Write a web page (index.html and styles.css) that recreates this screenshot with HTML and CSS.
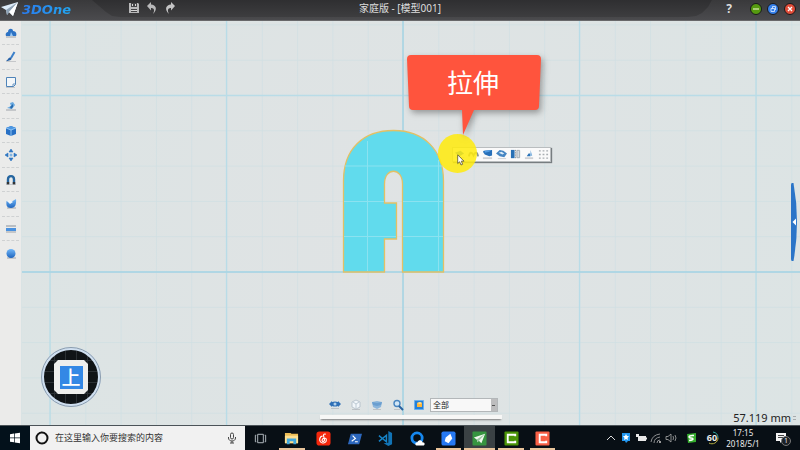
FILE: index.html
```html
<!DOCTYPE html>
<html lang="zh-CN">
<head>
<meta charset="utf-8">
<title>3DOne 家庭版</title>
<link rel="stylesheet" href="styles.css">
</head>
<body>
<svg class="defs" aria-hidden="true">
  <defs>
    <linearGradient id="ball" x1="0" y1="0" x2="0" y2="1"><stop offset="0" stop-color="#72b8fa"/><stop offset="1" stop-color="#1e64bd"/></linearGradient>
    <pattern id="minor" x="50" y="95" width="35.3" height="35.3" patternUnits="userSpaceOnUse"><path d="M0 0H35.3M0 0V35.3" stroke="#c3dbe2" stroke-width="1.3" fill="none"/></pattern>
  </defs>
</svg>

<header class="titlebar">
  <div class="brand">
    <svg class="brand-mark" viewBox="0 0 18 16"><path d="M0 5 17 0 12 14 8 10 6 13 5 8Z" fill="#dcebf8"/><path d="M5 8 17 0 6 13Z" fill="#8ea2b5"/><path d="M8 10 17 0 12 14Z" fill="#fff"/></svg>
    <span class="brand-name">3DOne</span>
  </div>
  <div class="quick">
    <button aria-label="保存"><svg viewBox="0 0 12 12"><path d="M1 1h9l1 1v9H1Z" fill="#b9b9ba"/><path d="M3 1h6v4H3ZM3 7h6v3H3Z" fill="#444446"/><path d="M4 2h1v2H4ZM7 2h1v2H7ZM3 8h6v1H3Z" fill="#d5d5d5"/></svg></button>
    <button aria-label="撤销"><svg viewBox="0 0 12 12"><path d="M1 4 5 0v2.500C10 3 12 7 7 12 9 8 8 6 5 6v2.500Z" fill="#b9b9ba"/></svg></button>
    <button aria-label="重做"><svg viewBox="0 0 12 12"><path d="M11 4 7 0v2.500C2 3 0 7 5 12 3 8 4 6 7 6v2.500Z" fill="#c4c4c5"/></svg></button>
  </div>
  <h1 class="doc">家庭版 - [模型001]</h1>
  <div class="window-controls">
    <button class="help">?</button>
    <button class="dot green" aria-label="最小化"><svg viewBox="0 0 10 10"><path d="M2 5h6" stroke="#dff0b8" stroke-width="1.200"/></svg></button>
    <button class="dot blue" aria-label="还原"><svg viewBox="0 0 10 10"><path d="M3 4.500h3.500v3H3ZM4.500 4.500v-2H7.500v3.500" fill="none" stroke="#e0eeff" stroke-width=".8"/></svg></button>
    <button class="dot red" aria-label="关闭"><svg viewBox="0 0 10 10"><path d="m3 3 4 4M7 3 3 7" stroke="#fff" stroke-width="1.300"/></svg></button>
  </div>
</header>

<main class="workspace">
  <nav class="tools" aria-label="工具">
    <button aria-label="基本实体"><svg viewBox="0 0 12 12"><path class="shade" d="M1 9h10v2H1Z"/><path d="M1 9C0 6 2 5 3 5 3 1 8 1 8 4c3 0 4 3 3 5Z" fill="#2d72c4"/><path d="m6 5 2 4H5Z" fill="#9ccaf5"/></svg></button>
    <button aria-label="草图绘制"><svg viewBox="0 0 12 12"><path class="shade" d="M1 10h10v1H1Z"/><path d="M6 7 9.500 1" stroke="#3c80ca" stroke-width="2"/><path d="M1 10C3 9 3 6.500 5.500 6.500 8 7.500 6 10 1 10Z" fill="#2862a8"/></svg></button>
    <button aria-label="草图编辑"><svg viewBox="0 0 12 12"><path d="M1.500 1.500h9v7l-2 2h-7Z" fill="#f3f6f9" stroke="#4f83b8"/><path d="M8 10.500V8h2.500" fill="none" stroke="#4f83b8" stroke-width=".8"/><path class="shade" d="M1 11h9v1H1Z"/></svg></button>
    <button aria-label="特征造型"><svg viewBox="0 0 12 12"><path class="shade" d="M1 9h10v2H1Z"/><path d="m2 8 4-2-1-3 3-1 2 3-3 4Z" fill="#69a8df"/><path d="m5 7 3-3v3L6 9Z" fill="#296bae"/></svg></button>
    <button aria-label="特殊功能"><svg viewBox="0 0 12 12"><path d="m6 1 5 2v6l-5 2-5-2V3Z" fill="#2870c5"/><path d="m6 1 5 2-5 2-5-2Z" fill="#4e98e3"/><path d="m1 3 5 2 5-2M6 5v6" fill="none" stroke="#a5d4fb" stroke-width=".8"/></svg></button>
    <button aria-label="基本编辑"><svg viewBox="0 0 12 12"><path d="m6 0 2 3H4ZM6 12l2-3H4ZM0 6l3-2v4ZM12 6 9 4v4Z" fill="#2e75c2" stroke="#2e75c2" stroke-width=".6"/><circle cx="6" cy="6" r="1.500" fill="#82b4e2"/></svg></button>
    <button aria-label="自动吸附"><svg viewBox="0 0 12 12"><path d="M3 10V5.500c0-4.500 6-4.500 6 0V10" fill="none" stroke="#26659f" stroke-width="2.400"/><path d="M1.800 8h2.400v2.500H1.800ZM7.800 8h2.400v2.500H7.800Z" fill="#333"/><path class="shade" d="M1 10h10v1H1Z"/></svg></button>
    <button aria-label="组合编辑"><svg viewBox="0 0 12 12"><path class="shade" d="M2 9h9v2H2Z"/><path d="M1.500 3 6 4l5-3c.5 5-.5 9-5 9S1 7 1.500 3Z" fill="url(#ball)"/><path d="m2 3 3-1 3 2-3 2Z" fill="#edf5fb"/></svg></button>
    <button aria-label="距离测量"><svg viewBox="0 0 12 12"><path d="M1 2h10v2H1Z" fill="#b9bec3"/><path d="M1 5h10v3H1Z" fill="#4a91df"/><path class="shade" d="M1 8h10v2H1Z"/></svg></button>
    <button aria-label="材质渲染"><svg viewBox="0 0 12 12"><path class="shade" d="M2 9h9v2H2Z"/><circle cx="6" cy="5.500" r="4.500" fill="url(#ball)"/></svg></button>
  </nav>

  <section class="canvas" aria-label="模型">
    <svg class="scene" viewBox="22 21 778 404" preserveAspectRatio="xMidYMid slice">
      <rect x="22" y="21" width="778" height="404" fill="url(#minor)" opacity=".55"/>
      <path d="M50 21V425M226.500 21V425M403 21V425M579.500 21V425M756 21V425M22 95.500H800M22 272H800" fill="none" stroke="#b9dce7" stroke-width="1.300"/>
      <path d="M403 21V425M22 272H800" stroke="#9fd0e1" stroke-width="1"/>
      <path d="M343.500 272V181C343.500 149 363 130.500 393.500 130.500S443.500 150 443.500 181V272H402.500V184C402.500 167 384.500 167 384.500 184V203H396.500V239H384.500V272Z" fill="#61dbed" stroke="#e2c066" stroke-width="1.300"/>
      <path d="M367.500 141V271M438.500 160V271M345 166H442M344 201.500H384M403 201.500H443M344 236.500H396M403 236.500H443" fill="none" stroke="#8be2f0" stroke-width="1"/>
    </svg>

    <div class="float-tools">
      <button aria-label="拉伸"><svg viewBox="0 0 12 12"><path d="m1 4 6-2 4 3-5 3Z" fill="#3b82c8"/><path class="shade" d="M2 9h9v1H2Z"/></svg></button>
      <button aria-label="旋转"><svg viewBox="0 0 12 12"><path d="M1 8c1-5 3-5 5-1 2-4 4-4 5 1" fill="none" stroke="#8c9690" stroke-width="2"/></svg></button>
      <button aria-label="扫掠"><svg viewBox="0 0 12 12"><path d="m2 2 9-1v6l-3 1-5-2-2-3Z" fill="#276fb9"/><path d="m3 2 7-1-2 2-5 1Z" fill="#4f9ae2"/><path class="shade" d="M1 9h10v2H1Z"/></svg></button>
      <button aria-label="放样"><svg viewBox="0 0 12 12"><path d="m0 5 4-4 4 1 4 3-3 4-5-1Z" fill="#4686c3"/><path d="m3 4 3-1 3 2-2 1Z" fill="#dcecf8"/><path class="shade" d="M2 10h9v1H2Z"/></svg></button>
      <button aria-label="镜像"><svg viewBox="0 0 12 12"><path d="M1 1h4v9H1Z" fill="#2870b5"/><path d="M7.500 1.500h3v8h-3Z" fill="#d5dbe0" stroke="#9da7af"/><path d="M6 1v10" stroke="#555" stroke-width=".8" stroke-dasharray="1"/></svg></button>
      <button aria-label="移动"><svg viewBox="0 0 12 12"><path d="M7 1v7H3l2-3h2" fill="#2d74b8"/><path d="m7 1 2 6-2 1Z" fill="#7fb2df"/><path class="shade" d="M1 9h9v2H1Z"/></svg></button>
      <button aria-label="阵列"><svg viewBox="0 0 12 12"><path d="M1 2h10M1 6h10M1 10h10" fill="none" stroke="#a8adb1" stroke-width="1.500" stroke-dasharray="2 2"/></svg></button>
    </div>
    <div class="spot"></div>
    <svg class="cursor" viewBox="0 0 8 12"><path d="M.7.800V9.500L2.600 7.800 4 11l1.600-.7L4.300 7.200H7Z" fill="#fff" stroke="#59522a" stroke-width=".8"/></svg>

    <div class="callout">
      <svg class="callout-shape" viewBox="0 0 134 81"><path d="M4 0H130Q134 0 134 4L132 51Q132 55 128 55H67L56 80 55 55H6Q2 55 2 51L0 4Q0 0 4 0Z" fill="#ff543d"/></svg>
      <span class="callout-text">拉伸</span>
    </div>

    <button class="drawer" aria-label="展开"><svg viewBox="0 0 8 78"><path d="M1 0H2.500Q9.500 39 2.500 78H1Q0 78 0 76V2Q0 0 1 0Z" fill="#2b75c8"/><path d="m1.500 39 3.500-3.500v7Z" fill="#fff"/></svg></button>

    <button class="view-disc" aria-label="上视图"><span class="view-tile"><span class="view-face">上</span></span></button>

    <div class="view-bar">
      <div class="view-row">
        <button aria-label="查看"><svg viewBox="0 0 12 12"><path d="m0 5 3-3v1q3-1 6 0V2l3 3-3 3V7q-3 1-6 0v1Z" fill="#2f70b7"/><circle cx="6" cy="5" r="1.500" fill="#b2d2ec"/><path class="shade" d="M2 9h8v1H2Z"/></svg></button>
        <button aria-label="线框"><svg viewBox="0 0 12 12"><path d="m6 1 4 2v5l-4 2-4-2V3Z" fill="#f1f6fa" stroke="#aebbc6" stroke-width=".8"/><path d="m3 3 3 2 3-2M6 5v4" fill="none" stroke="#bdcad4"/><path class="shade" d="M2 10h8v1H2Z"/></svg></button>
        <button aria-label="着色"><svg viewBox="0 0 12 12"><path d="m1 3 5-1 5 1-1 5-4 2-4-2Z" fill="#8bb5db"/><path d="m1 3 5 1 5-1-1 3-4 1-4-1Z" fill="#6b9fd0"/><path class="shade" d="M2 10h8v1H2Z"/></svg></button>
        <button aria-label="缩放"><svg viewBox="0 0 12 12"><circle cx="5" cy="4.500" r="3" fill="#d3e7f6" stroke="#4a86c0" stroke-width="1.400"/><path d="m7 7 4 4" stroke="#2862a0" stroke-width="2"/><path class="shade" d="M2 10h6v1H2Z"/></svg></button>
        <button aria-label="显示"><svg viewBox="0 0 12 12"><path d="M1.500 1.500h9v9h-9Z" fill="#2580d7" stroke="#6ab0ee"/><path d="m4 4 3-1 2 1v4H4Z" fill="#ffb637"/><path d="m4 4 3-1 2 1-2 1Z" fill="#ffe499"/></svg></button>
        <select aria-label="过滤"><option>全部</option></select>
      </div>
      <div class="view-shelf"></div>
    </div>
    <output class="measure">57.119 mm<i></i></output>
  </section>
</main>

<footer class="taskbar">
  <button class="start" aria-label="开始"><svg viewBox="0 0 12 12"><path d="m1 2.200 4-.6v4H1ZM5.700 1.500 11 .8v4.800H5.700ZM1 6.300h4v4l-4-.6ZM5.700 6.300H11v4.900l-5.300-.7Z" fill="#fff"/></svg></button>
  <label class="search">
    <svg class="ring" viewBox="0 0 14 14"><circle cx="7" cy="7" r="5.500" fill="none" stroke="#111" stroke-width="2"/></svg>
    <input type="text" placeholder="在这里输入你要搜索的内容" aria-label="搜索">
    <svg class="mic" viewBox="0 0 10 12"><rect x="3.500" y="1" width="3" height="6" rx="1.500" fill="none" stroke="#444"/><path d="M1.500 5v1c0 4 7 4 7 0V5M5 9v2M3 11h4" fill="none" stroke="#444"/></svg>
  </label>
  <nav class="apps" aria-label="应用">
    <button aria-label="任务视图"><svg viewBox="0 0 16 16"><path d="M5 3.500h6v9H5ZM3.500 4.500h-1v7h1M12.500 4.500h1v7h-1" fill="none" stroke="#b9c0c5"/></svg></button>
    <button class="open" aria-label="文件夹"><svg viewBox="0 0 16 16"><path d="M1 2h6l1 1h7v10H1Z" fill="#edbd55"/><path d="M1 5h14v8H1Z" fill="#ffe091"/><path d="M3 14V8h10v6h-3v-3H6v3Z" fill="#42a8dd"/></svg></button>
    <button aria-label="音乐"><svg viewBox="0 0 16 16"><rect x=".5" y=".5" width="15" height="15" rx="3" fill="#f5270c"/><path d="M10.500 3.500Q8 2.500 8 5l1 4c.5 3-3 2.500-2.500.5C7 7 11 6.500 11 9.500c0 5-8 4-7-1C4.500 6.500 6 5.500 7 5.500" fill="none" stroke="#fff" stroke-width="1.200"/></svg></button>
    <button aria-label="终端"><svg viewBox="0 0 16 16"><path d="M4 3h12l-3 11H1Z" fill="#2c67bd"/><path d="m6 5 3 3-4 3M8.500 11.500h3" fill="none" stroke="#fff" stroke-width="1.200"/></svg></button>
    <button aria-label="编辑器"><svg viewBox="0 0 16 16"><path d="m11 0 4 2v12l-4 2-5-3 5-.5Z" fill="#1173b5"/><path d="m1 5 8 6.500V4.500L1 11" fill="none" stroke="#1683c7" stroke-width="1.600"/></svg></button>
    <button aria-label="浏览器"><svg viewBox="0 0 16 16"><circle cx="7.500" cy="7.500" r="5.500" fill="none" stroke="#1688ef" stroke-width="3"/><path d="M7 15.500c-2.500-1-1-4 1-3.500 1-3 5-2.500 5 0 3-.5 3.500 3 1 3.500Z" fill="#fff"/></svg></button>
    <button class="open" aria-label="笔记"><svg viewBox="0 0 16 16"><rect x=".5" y=".5" width="15" height="15" rx="2" fill="#2679f2"/><path d="m5 7 5-4 2 5-4 5-4-2Z" fill="#fff"/></svg></button>
    <button class="open active" aria-label="3DOne"><svg viewBox="0 0 16 16"><rect x=".5" y=".5" width="15" height="15" rx="1" fill="#369440"/><path d="m2 7 12-4-4 10-3-3-1 2-1-3Z" fill="#f1f8ef"/><path d="m5 9 9-6-8 9Z" fill="#9dc7a3"/></svg></button>
    <button class="open" aria-label="录屏"><svg viewBox="0 0 16 16"><rect x=".5" y=".5" width="15" height="15" rx="1" fill="#4b9407"/><path d="M12 5.500V4H4v8h8v-1.500" fill="none" stroke="#fff" stroke-width="2"/></svg></button>
    <button class="open" aria-label="剪辑"><svg viewBox="0 0 16 16"><rect x=".5" y=".5" width="15" height="15" rx="1" fill="#f96046"/><path d="M12 5.500V4H5v8h7v-1.500" fill="none" stroke="#fff" stroke-width="2"/></svg></button>
  </nav>
  <div class="tray">
    <button aria-label="更多"><svg viewBox="0 0 12 12"><path d="m2 8 4-4 4 4" fill="none" stroke="#ddd"/></svg></button>
    <button aria-label="助手"><svg viewBox="0 0 12 12"><path d="M2 1h8v8H8l-2 2-1-2H2Z" fill="#2397ef"/><path d="m6 2 1 2h2L7.500 6 8 8 6 7 4 8l.5-2L3 4h2Z" fill="#fff"/></svg></button>
    <button aria-label="电源"><svg viewBox="0 0 12 12"><path d="M3 4h8v5H3ZM11 5.500h1v2h-1ZM1 2h3v3H1Z" fill="#e8e8e8"/></svg></button>
    <button aria-label="网络"><svg viewBox="0 0 12 12"><path d="M1 10Q2 3 10 2M4 11q0-5 6-6M7 11q0-3 3-3" fill="none" stroke="#8c8e90"/><path d="M9 9h2v2H9Z" fill="#999"/></svg></button>
    <button aria-label="音量"><svg viewBox="0 0 12 12"><path d="M1 4.500h2l3-2.500v8L3 7.500H1ZM8 4q1 2 0 4M10 3q2 3 0 6" fill="none" stroke="#aaa" stroke-width=".8"/></svg></button>
    <button class="ime" aria-label="输入法"><svg viewBox="0 0 12 12"><path d="m2 2 9-1v9l-8 1Z" fill="#35ad2e"/><path d="M9 3.500C2 3 4 6 6 6s4 2-2 2.500" fill="none" stroke="#fff" stroke-width="1.600"/></svg></button>
    <div class="gauge"><svg viewBox="0 0 14 14"><path d="M8 1a6 6 0 0 1 5 6" fill="none" stroke="#32a7a0"/><path d="M13 7a6 6 0 0 1-9 5" fill="none" stroke="#b4ad42"/></svg><span>60</span></div>
    <time class="clock" datetime="2018-05-01T17:15"><span>17:15</span><span>2018/5/1</span></time>
    <button class="notice" aria-label="通知"><svg viewBox="0 0 12 12"><path d="M1 1h10v8H7l-2 2V9H1Z" fill="#f3f3f3"/><path d="M3 3.500h6M3 5.500h6" stroke="#444"/></svg><span>1</span></button>
  </div>
</footer>
</body>
</html>
```
FILE: styles.css
```css
* { box-sizing: border-box; }
body {
  margin: 0;
  min-height: 100vh;
  display: flex;
  flex-direction: column;
  overflow: hidden;
  font-family: "Noto Sans", "Noto Sans CJK SC", sans-serif;
  background: #dfe4e4;
}
button {
  display: flex;
  align-items: center;
  justify-content: center;
  padding: 0;
  border: 0;
  background: none;
  color: inherit;
  font: inherit;
}
svg { display: block; flex: none; }
.defs { position: absolute; width: 0; height: 0; }
.shade { fill: #8b929a; opacity: .4; }

.titlebar {
  display: grid;
  grid-template-columns: 1fr auto 1fr;
  align-items: center;
  height: 21px;
  position: relative;
  background: linear-gradient(#2f2f31, #3d3d3f 17px, #474749 17px, #4b4b4e);
  border-bottom: 1px solid #68686a;
  color: #ddd;
}
.titlebar::before, .titlebar::after {
  content: "";
  position: absolute;
  top: 0;
  bottom: 0;
  width: 120px;
  background: linear-gradient(#39393b, #4b4b4e);
}
.titlebar::before { left: 0; clip-path: polygon(0 0, 92px 0, 99px 6px, 106px 12px, 112px 16px, 120px 17px, 120px 100%, 0 100%); }
.titlebar::after { right: 0; clip-path: polygon(100% 0, 32px 0, 28px 7px, 22px 13px, 16px 16px, 8px 17px, 0 17px, 0 100%, 100% 100%); }
.titlebar > * { z-index: 1; }
.brand { grid-column: 1; grid-row: 1; display: flex; align-items: center; gap: 3px; padding-left: 1px; }
.brand-mark { width: 18px; height: 16px; }
.brand-name {
  font: italic bold 13px/18px "DejaVu Sans", sans-serif;
  background: linear-gradient(90deg, #2a7bee, #22a8f1);
  background-clip: text;
  color: transparent;
  padding-right: 2px;
}
.quick { grid-column: 1; grid-row: 1; display: flex; gap: 6px; margin-left: 128px; align-self: start; padding-top: 2px; }
.quick svg { width: 12px; height: 12px; }
.doc { grid-column: 2; margin: 0; font-size: 10px; line-height: 17px; font-weight: 400; align-self: start; }
.window-controls { grid-column: 3; display: flex; align-items: center; justify-content: flex-end; gap: 5px; padding-right: 4px; align-self: start; height: 17px; }
.help { font: bold 12px/16px "Noto Sans", sans-serif; margin-right: 13px; }
.dot { width: 12px; height: 12px; border-radius: 50%; border: 1px solid #19191c; }
.dot svg { width: 10px; height: 10px; }
.green { background: #559a10; }
.blue { background: #357fe9; }
.red { background: #df4c38; }

.workspace { flex: 1; display: flex; min-height: 0; }
.tools {
  width: 22px;
  background: #ebebea;
  border-right: 1px solid #d9e3e4;
  display: grid;
  grid-auto-rows: 24px 25px;
  align-content: start;
  padding: 0 2px;
}
.tools button { border-bottom: 1px dashed #cfd1d2; }
.tools button:last-child { border-bottom: 0; }
.tools svg { width: 12px; height: 12px; }
.canvas { flex: 1; position: relative; overflow: hidden; background: radial-gradient(circle, #e0e3e4, #dce4e4); }
.scene { position: absolute; inset: 0; width: 100%; height: 100%; }

.float-tools {
  position: absolute;
  left: calc(50% + 41px);
  top: calc(50% - 76px);
  display: flex;
  align-items: center;
  gap: 3px;
  height: 15px;
  padding: 0 1px;
  background: #fafafa;
  border: 1px solid #b9bdbf;
  box-shadow: 1px 1px 1px #777d80;
}
.float-tools svg { width: 11px; height: 11px; }
.spot {
  position: absolute;
  left: calc(50% + 27px);
  top: calc(50% - 89px);
  width: 39px;
  height: 39px;
  border-radius: 50%;
  background: #ffeb0edb;
}
.cursor { position: absolute; left: calc(50% + 46px); top: calc(50% - 69px); width: 8px; height: 12px; }
.callout {
  position: absolute;
  left: calc(50% - 4px);
  top: calc(50% - 168px);
  width: 134px;
  height: 55px;
  display: flex;
  align-items: center;
  justify-content: center;
}
.callout-shape { position: absolute; left: 0; top: 0; width: 134px; height: 81px; overflow: visible; filter: drop-shadow(2px 3px 3px #5558); }
.callout-text { position: relative; color: #fff; font: 26px/36px "Noto Sans CJK SC", sans-serif; padding: 0 2px 2px 0; }
.drawer { position: absolute; right: 1px; top: calc(50% - 40px); }
.drawer svg { width: 8px; height: 78px; }

.view-disc {
  position: absolute;
  left: 19px;
  bottom: 18px;
  width: 60px;
  height: 60px;
  border-radius: 50%;
  border: 3px solid #cfdff0;
  outline: 1px solid #8b9cad;
  outline-offset: -1px;
  background:
    repeating-linear-gradient(90deg, #0000 0 10px, #2b3034 10px 11px),
    repeating-linear-gradient(#0000 0 10px, #2b3034 10px 11px),
    #101417;
}
.view-tile {
  display: grid;
  place-items: center;
  width: 34px;
  height: 34px;
  background: #efefed;
  clip-path: polygon(4px 0, 30px 0, 100% 4px, 100% 30px, 30px 100%, 4px 100%, 0 30px, 0 4px);
}
.view-face {
  display: grid;
  place-items: center;
  width: 23px;
  height: 23px;
  background: #3488e5;
  color: #fff;
  font: 500 19px/22px "Noto Sans CJK SC", sans-serif;
}

.view-bar { position: absolute; left: calc(50% - 91px); bottom: 6px; width: 182px; }
.view-row { display: flex; align-items: center; gap: 9px; padding: 0 4px 0 9px; height: 14px; }
.view-row svg { width: 12px; height: 12px; }
.view-row select {
  flex: 1;
  min-width: 0;
  margin-left: -4px;
  height: 14px;
  padding: 0 2px;
  appearance: none;
  border: 1px solid #b3b7b9;
  border-radius: 0;
  color: #222;
  font: 8px/12px "Noto Sans CJK SC", sans-serif;
  background:
    linear-gradient(#555, #555) right 2px center / 3px 1px no-repeat,
    linear-gradient(#bdbdbe, #bdbdbe) right / 6px 100% no-repeat,
    #f8f8f8;
}
.view-shelf { height: 4px; margin-top: 3px; background: #f7f7f6; box-shadow: 0 2px 2px -1px #777; }
.measure {
  position: absolute;
  right: 4px;
  bottom: 0;
  display: flex;
  align-items: center;
  gap: 2px;
  font-size: 11px;
  line-height: 14px;
  color: #222;
}
.measure i { width: 3px; height: 4px; border: solid #a7abad; border-width: 1px 0; }

.taskbar { display: flex; height: 25px; background: #080f15; border-top: 1px solid #4b5358; color: #eee; }
.start { width: 30px; background: #03111b; }
.start svg { width: 12px; height: 12px; }
.search { display: flex; align-items: center; flex: 0 1 215px; gap: 6px; padding: 0 8px 0 5px; background: #f1f1f1; }
.ring { width: 14px; height: 14px; }
.search input {
  flex: 1;
  min-width: 0;
  padding: 0;
  border: 0;
  background: none;
  font: 9px/16px "Noto Sans CJK SC", sans-serif;
}
.search input::placeholder { color: #333; opacity: 1; }
.mic { width: 10px; height: 12px; }
.apps { display: grid; grid-template-columns: repeat(10, 1fr); flex: 0 1 313px; }
.apps button { position: relative; }
.apps svg { width: 15px; height: 15px; }
.apps .active { background: #3a4144; }
.open::after { content: ""; position: absolute; left: 3px; right: 3px; bottom: 0; height: 2px; background: #e9c49b; }
.active::after { left: 0; right: 0; }
.tray { display: flex; align-items: center; margin-left: auto; gap: 3px; padding-right: 13px; }
.tray svg { width: 12px; height: 12px; }
.ime { margin-left: 5px; }
.gauge { position: relative; display: grid; place-items: center; margin-left: 5px; font-size: 9px; line-height: 12px; font-weight: 700; }
.gauge > * { grid-area: 1 / 1; }
.tray .gauge svg { width: 14px; height: 14px; }
.clock { display: flex; flex-direction: column; align-items: center; width: 36px; margin: 0 11px 0 3px; font-size: 8px; line-height: 11px; white-space: nowrap; }
.notice { position: relative; }
.notice span {
  position: absolute;
  left: 6px;
  top: 4px;
  width: 10px;
  height: 10px;
  border-radius: 50%;
  border: 1px solid #777;
  background: #1b2025;
  font-size: 7px;
  line-height: 8px;
}
```
